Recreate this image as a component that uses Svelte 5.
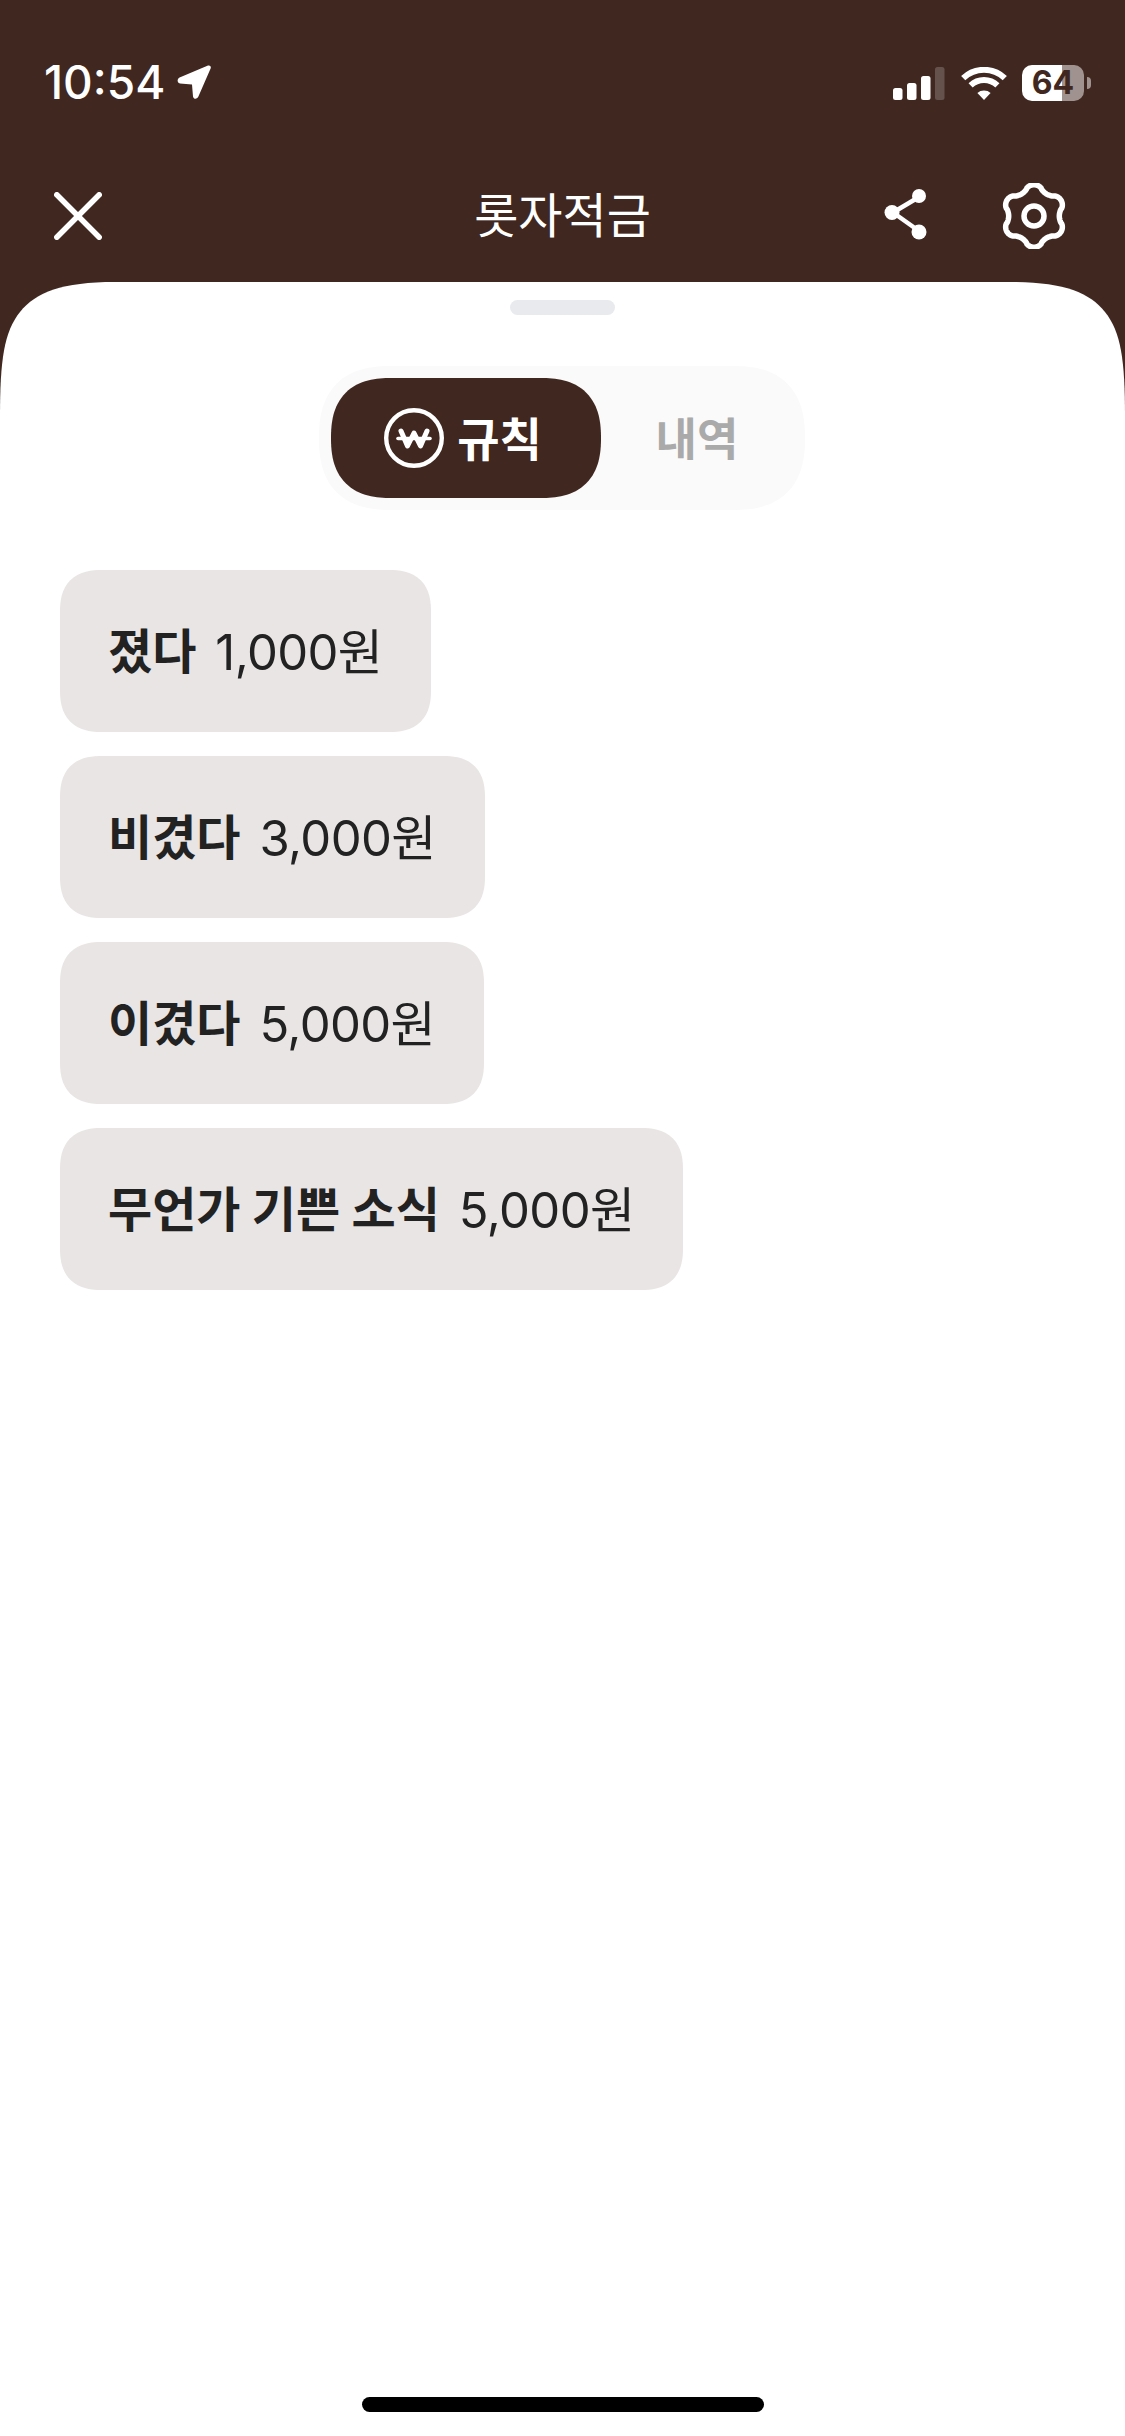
<script lang="ts">
	const rules = [
		{ name: '졌다', amount: '1,000원' },
		{ name: '비겼다', amount: '3,000원' },
		{ name: '이겼다', amount: '5,000원' },
		{ name: '무언가 기쁜 소식', amount: '5,000원' }
	];

	// wavy six-lobed outline for the settings gear
	const gearPath = Array.from({ length: 180 }, (_, i) => {
		const t = (i / 180) * Math.PI * 2;
		const c = Math.cos(6 * t);
		const r = 28.3 + 3 * Math.sign(c) * Math.pow(Math.abs(c), 0.7);
		const x = 33 + r * Math.sin(t);
		const y = 33 - r * Math.cos(t);
		return `${i ? 'L' : 'M'}${x.toFixed(2)} ${y.toFixed(2)}`;
	}).join(' ') + ' Z';
</script>

<div class="screen">
	<header class="top">
		<div class="status">
			<div class="status-left">
				<span class="time">10:54</span>
				<svg class="arrow" width="34" height="34" viewBox="0 0 34 34">
					<path d="M31 0.6 C33 0 34.4 1.4 33.6 3.6 L21.4 31.6 C20 34.6 16.6 34.4 16 31.4 L15 19.5 L3 18.6 C0 18 -0.2 13.8 2.6 12.4 Z" fill="#fff" />
				</svg>
			</div>
			<div class="status-right">
				<svg width="52" height="33" viewBox="0 0 52 33" fill="#fff">
					<rect x="0" y="21" width="9.5" height="12" rx="2.5" />
					<rect x="14" y="16" width="9.5" height="17" rx="2.5" />
					<rect x="28" y="9" width="9.5" height="24" rx="2.5" />
					<rect x="42" y="0" width="9.5" height="33" rx="2.5" opacity="0.2" />
				</svg>
				<svg class="wifi" width="46" height="33" viewBox="0 0 46 33" fill="none" stroke="#fff" stroke-width="6">
					<path d="M2.2 11.2 A30 30 0 0 1 43.8 11.2" />
					<path d="M9.6 18.4 A19.5 19.5 0 0 1 36.4 18.4" />
					<path d="M23 33 L16.4 26 A10 10 0 0 1 29.6 26 Z" fill="#fff" stroke="none" />
				</svg>
				<div class="battery">
					<div class="battery-body">
						<span class="battery-text">64</span>
					</div>
					<div class="battery-nub"></div>
				</div>
			</div>
		</div>
		<nav class="nav">
			<svg width="48" height="48" viewBox="0 0 48 48" fill="none" stroke="#fff" stroke-width="5.5" stroke-linecap="round">
				<line x1="2.8" y1="2.8" x2="45.2" y2="45.2" />
				<line x1="45.2" y1="2.8" x2="2.8" y2="45.2" />
			</svg>
			<span class="title">롯자적금</span>
			<div class="nav-actions">
				<svg class="share" width="44" height="52" viewBox="0 0 44 52" fill="#fff" stroke="#fff">
					<line x1="35" y1="9" x2="9" y2="24.5" stroke-width="4.5" />
					<line x1="9" y1="24.5" x2="35" y2="43" stroke-width="4.5" />
					<circle cx="35" cy="8" r="7" stroke="none" />
					<circle cx="8" cy="24.5" r="7.5" stroke="none" />
					<circle cx="35" cy="44" r="7.5" stroke="none" />
				</svg>
				<svg width="66" height="66" viewBox="0 0 66 66" fill="none" stroke="#fff" stroke-width="5.5" stroke-linejoin="round">
					<path d={gearPath} />
					<circle cx="33" cy="33" r="10" />
				</svg>
			</div>
		</nav>
	</header>

	<main class="sheet">
		<div class="handle"></div>
		<div class="segment">
			<div class="seg-item active">
				<svg width="60" height="60" viewBox="0 0 60 60" fill="none" stroke="#fff">
					<circle cx="30" cy="30" r="27.8" stroke-width="4.4" />
					<path d="M17 23 L23.5 38 L30 25 L36.5 38 L43 23" stroke-width="5" stroke-linecap="round" stroke-linejoin="round" />
					<path d="M14 30.5 H46" stroke-width="3.6" stroke-linecap="round" />
				</svg>
				<span>규칙</span>
			</div>
			<div class="seg-item">
				<span>내역</span>
			</div>
		</div>

		<ul class="rules">
			{#each rules as rule}
				<li class="chip">
					<strong>{rule.name}</strong>
					<span>{rule.amount}</span>
				</li>
			{/each}
		</ul>

		<div class="home-indicator"></div>
	</main>
</div>

<style>
	:global(body) {
		margin: 0;
		background: #fff;
	}

	.screen {
		display: flex;
		flex-direction: column;
		height: 2436px;
		background: #402720;
		font-family: Inter, 'Noto Sans CJK KR', sans-serif;
		overflow: hidden;
	}

	.top {
		flex: none;
		height: 282px;
		box-sizing: border-box;
		padding-top: 64px;
	}

	.status {
		display: flex;
		justify-content: space-between;
		align-items: center;
		height: 36px;
		padding: 0 34px 0 44px;
	}

	.status-left {
		display: flex;
		align-items: center;
		gap: 12px;
	}

	.time {
		font-size: 46px;
		font-weight: 500;
		line-height: 36px;
		color: #fff;
	}

	.status-right {
		display: flex;
		align-items: center;
		gap: 15px;
		margin-top: 2px;
	}

	.wifi {
		margin-left: 1px;
	}

	.battery {
		display: flex;
		align-items: center;
		gap: 3px;
	}

	.battery-body {
		display: flex;
		align-items: center;
		justify-content: center;
		width: 62px;
		height: 36px;
		border-radius: 10px;
		background: linear-gradient(90deg, #fff 40px, #a0938f 40px);
	}

	.battery-text {
		font-size: 32px;
		font-weight: 700;
		color: #402720;
		line-height: 36px;
	}

	.battery-nub {
		width: 4px;
		height: 12px;
		border-radius: 0 6px 6px 0;
		background: #a0938f;
	}

	.nav {
		position: relative;
		display: flex;
		align-items: center;
		justify-content: space-between;
		height: 66px;
		margin-top: 83px;
		padding: 0 58px 0 54px;
	}

	.title {
		position: absolute;
		left: 0;
		right: 0;
		text-align: center;
		font-size: 48px;
		font-weight: 400;
		color: #fff;
		line-height: 66px;
	}

	.nav-actions {
		display: flex;
		align-items: center;
		gap: 73px;
	}

	.share {
		margin-bottom: 4px;
	}

	.sheet {
		position: relative;
		flex: 1;
		display: flex;
		flex-direction: column;
		background: #fff;
		clip-path: path('M0 135 C0 78 4 50 20 30 C36 10 62 0 115 0 H1010 C1063 0 1089 10 1105 30 C1121 50 1125 78 1125 135 V2154 H0 Z');
	}

	.handle {
		flex: none;
		align-self: center;
		width: 105px;
		height: 15px;
		margin-top: 18px;
		border-radius: 8px;
		background: #e9eaee;
	}

	.segment {
		flex: none;
		align-self: center;
		display: flex;
		align-items: stretch;
		box-sizing: border-box;
		width: 486px;
		height: 144px;
		margin: 51px 1px 0 0;
		padding: 12px;
		border-radius: 72px;
		corner-shape: superellipse(1.3);
		background: #fafafa;
	}

	.seg-item {
		display: flex;
		align-items: center;
		justify-content: center;
		flex: 1;
		gap: 13px;
		padding-bottom: 4px;
		box-sizing: border-box;
		font-size: 45px;
		font-weight: 700;
		color: #aaa;
	}

	.seg-item.active {
		flex: none;
		width: 270px;
		padding-right: 6px;
		border-radius: 60px;
		corner-shape: superellipse(1.3);
		background: #402720;
		font-size: 46px;
		color: #fff;
	}

	.seg-item.active svg {
		margin-top: 4px;
	}

	.rules {
		display: flex;
		flex-direction: column;
		align-items: flex-start;
		gap: 24px;
		margin: 60px 0 0;
		padding: 0 60px;
		list-style: none;
	}

	.chip {
		display: flex;
		align-items: center;
		gap: 19px;
		height: 162px;
		box-sizing: border-box;
		padding: 0 49px 6px 48px;
		border-radius: 42px;
		corner-shape: superellipse(1.3);
		background: #e8e5e4;
		font-size: 48px;
		color: #222;
		white-space: nowrap;
	}

	.chip strong {
		font-weight: 700;
	}

	.chip span {
		font-size: 49px;
		font-weight: 400;
		letter-spacing: -0.6px;
	}

	.home-indicator {
		position: absolute;
		left: 362px;
		bottom: 24px;
		width: 402px;
		height: 15px;
		border-radius: 8px;
		background: #000;
	}
</style>
